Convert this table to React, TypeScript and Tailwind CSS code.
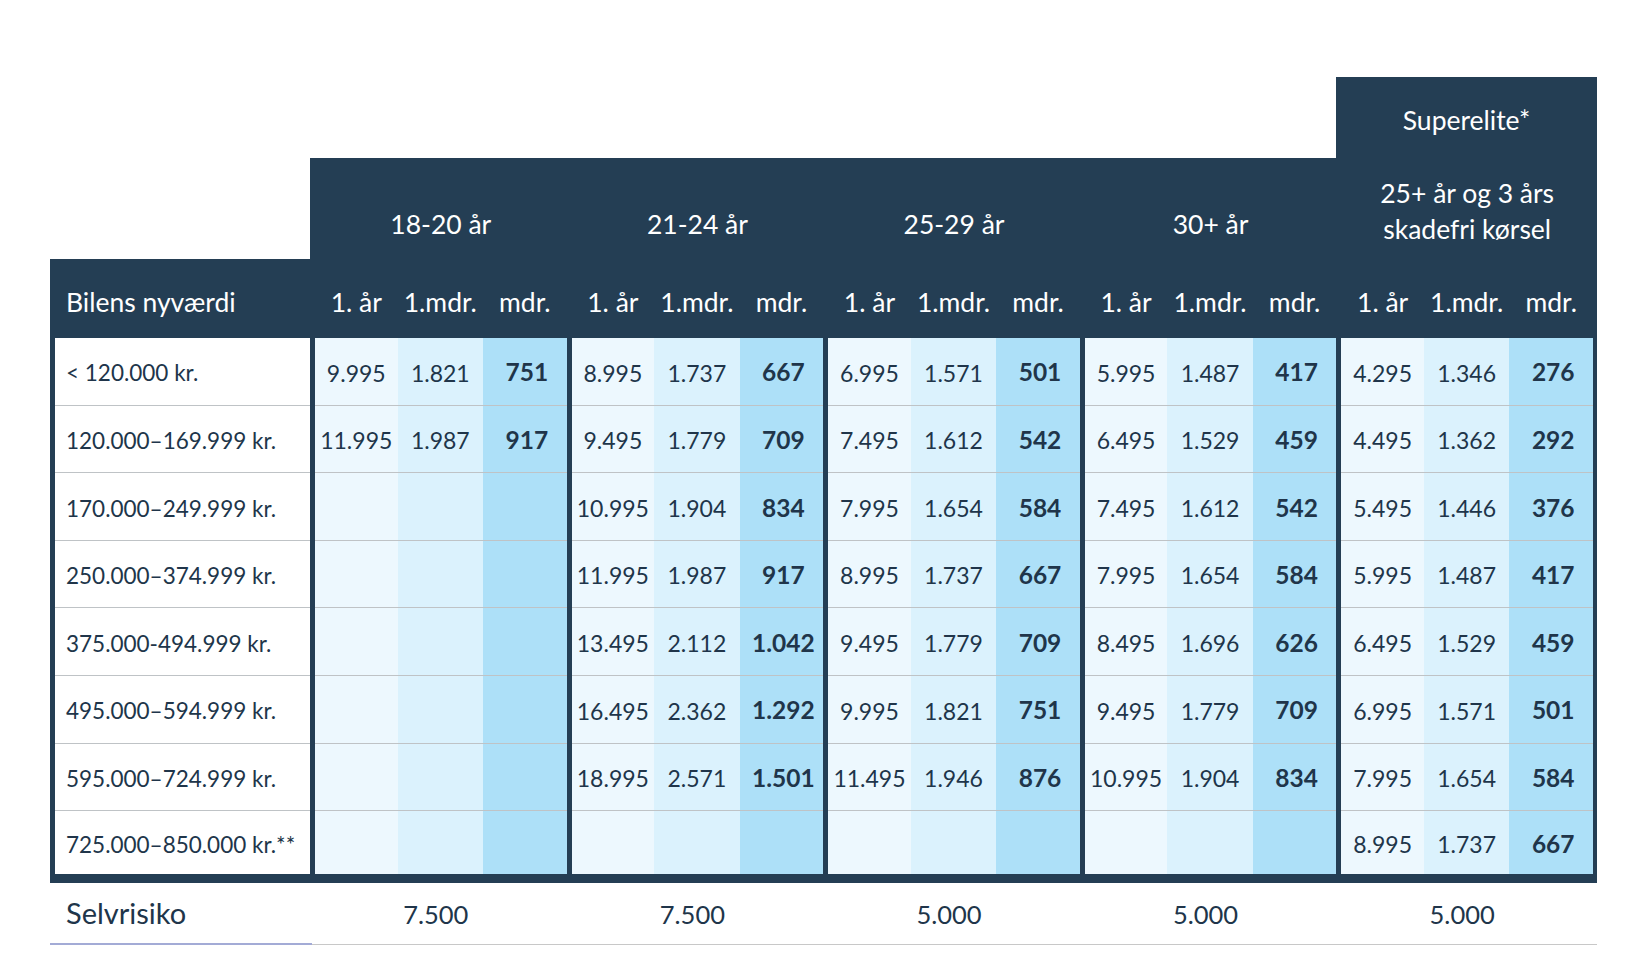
import React from 'react';

type Row = [string, string, string] | null;

interface Group {
  label: string[];
  rows: Row[];
  selvrisiko: string;
}

const rowLabels = [
  '< 120.000 kr.',
  '120.000–169.999 kr.',
  '170.000–249.999 kr.',
  '250.000–374.999 kr.',
  '375.000-494.999 kr.',
  '495.000–594.999 kr.',
  '595.000–724.999 kr.',
  '725.000–850.000 kr.**',
];

const groups: Group[] = [
  {
    label: ['18-20 år'],
    rows: [['9.995', '1.821', '751'], ['11.995', '1.987', '917'], null, null, null, null, null, null],
    selvrisiko: '7.500',
  },
  {
    label: ['21-24 år'],
    rows: [
      ['8.995', '1.737', '667'],
      ['9.495', '1.779', '709'],
      ['10.995', '1.904', '834'],
      ['11.995', '1.987', '917'],
      ['13.495', '2.112', '1.042'],
      ['16.495', '2.362', '1.292'],
      ['18.995', '2.571', '1.501'],
      null,
    ],
    selvrisiko: '7.500',
  },
  {
    label: ['25-29 år'],
    rows: [
      ['6.995', '1.571', '501'],
      ['7.495', '1.612', '542'],
      ['7.995', '1.654', '584'],
      ['8.995', '1.737', '667'],
      ['9.495', '1.779', '709'],
      ['9.995', '1.821', '751'],
      ['11.495', '1.946', '876'],
      null,
    ],
    selvrisiko: '5.000',
  },
  {
    label: ['30+ år'],
    rows: [
      ['5.995', '1.487', '417'],
      ['6.495', '1.529', '459'],
      ['7.495', '1.612', '542'],
      ['7.995', '1.654', '584'],
      ['8.495', '1.696', '626'],
      ['9.495', '1.779', '709'],
      ['10.995', '1.904', '834'],
      null,
    ],
    selvrisiko: '5.000',
  },
  {
    label: ['25+ år og 3 års', 'skadefri kørsel'],
    rows: [
      ['4.295', '1.346', '276'],
      ['4.495', '1.362', '292'],
      ['5.495', '1.446', '376'],
      ['5.995', '1.487', '417'],
      ['6.495', '1.529', '459'],
      ['6.995', '1.571', '501'],
      ['7.995', '1.654', '584'],
      ['8.995', '1.737', '667'],
    ],
    selvrisiko: '5.000',
  },
];

export default function App() {
  return (
    <div className="min-h-screen bg-white font-['Lato',sans-serif] text-[#20354a]">
      <div className="pt-[77px] pl-[50px]">
        <div className="w-[1547px]">
          {/* Superelite tab */}
          <div className="flex h-[81px] justify-end">
            <div className="w-[261px] bg-[#243e54] flex items-center justify-center pt-[6px] text-white text-[26.5px]">
              Superelite*
            </div>
          </div>

          {/* Age groups */}
          <div className="flex h-[101px]">
            <div className="w-[260px]" />
            <div className="flex-1 bg-[#243e54] flex gap-[5px] pl-[5px] pr-[4px] text-white text-[26.5px]">
              {groups.map((g, i) => (
                <div
                  key={i}
                  className={
                    g.label.length > 1
                      ? 'flex-1 flex flex-col items-center justify-center leading-[36px] pt-[4px]'
                      : 'flex-1 flex items-center justify-center pt-[32px]'
                  }
                >
                  {g.label.map((l) => (
                    <span key={l}>{l}</span>
                  ))}
                </div>
              ))}
            </div>
          </div>

          {/* Sub header */}
          <div className="flex h-[79px] bg-[#243e54] pl-[5px] pr-[4px] gap-[5px] text-white text-[26.5px]">
            <div className="w-[255px] flex items-center pl-[11px] pt-[9px]">Bilens nyværdi</div>
            {groups.map((_, i) => (
              <div key={i} className="flex-1 grid grid-cols-[83fr_86fr_84fr] items-center pt-[9px] text-center">
                <span>1. år</span>
                <span>1.mdr.</span>
                <span>mdr.</span>
              </div>
            ))}
          </div>

          {/* Data rows */}
          <div className="bg-[#243e54] pl-[5px] pr-[4px] pb-[9px]">
            {rowLabels.map((label, r) => {
              const last = r === rowLabels.length - 1;
              const border = last ? '' : 'border-b border-[#bfc3c6]';
              return (
                <div key={r} className={`flex gap-[5px] text-[23px] ${last ? 'h-[63px]' : 'h-[67.6px]'}`}>
                  <div className={`w-[255px] bg-white flex items-center pl-[11px] pt-[4px] whitespace-nowrap text-[22.5px] ${border}`}>
                    {label}
                  </div>
                  {groups.map((g, i) => {
                    const row = g.rows[r];
                    return (
                      <div key={i} className="flex-1 grid grid-cols-[83fr_86fr_84fr] text-center">
                        <div className={`bg-[#edf8fe] flex items-center justify-center pt-[3px] ${border}`}>{row ? row[0] : ''}</div>
                        <div className={`bg-[#dbf2fd] flex items-center justify-center pt-[3px] ${border}`}>{row ? row[1] : ''}</div>
                        <div className={`bg-[#ade0f8] flex items-center justify-center pt-[3px] pl-[4px] font-bold text-[24.5px] ${border}`}>
                          {row ? row[2] : ''}
                        </div>
                      </div>
                    );
                  })}
                </div>
              );
            })}
          </div>

          {/* Selvrisiko */}
          <div className="flex h-[62px]">
            <div className="w-[262px] flex items-center pl-[16px] text-[29px] border-b-2 border-[#a3abd6]">Selvrisiko</div>
            <div className="flex-1 flex gap-[5px] pl-[3px] pr-[4px] border-b border-[#c8c8c8] text-[25.5px]">
              {groups.map((g, i) => (
                <div key={i} className="flex-1 flex items-center justify-center pr-[10px]">
                  {g.selvrisiko}
                </div>
              ))}
            </div>
          </div>
        </div>
      </div>
    </div>
  );
}
